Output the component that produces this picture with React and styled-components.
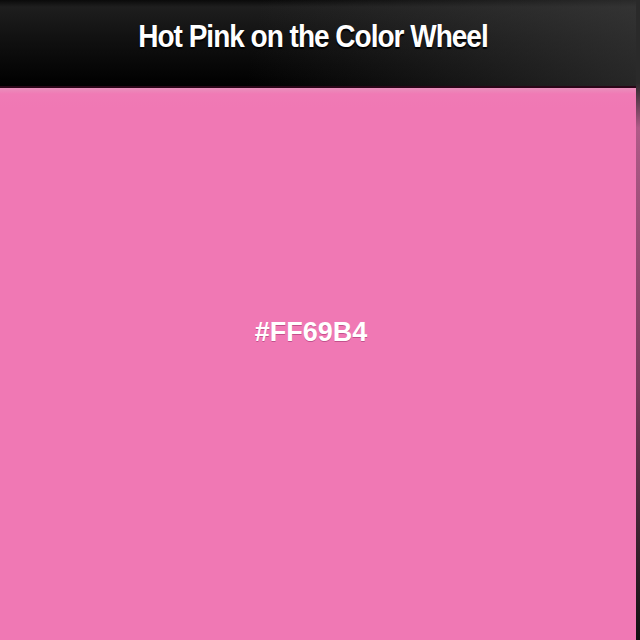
import React from 'react';
import styled, { createGlobalStyle } from 'styled-components';

const GlobalStyle = createGlobalStyle`
  html, body {
    margin: 0;
    padding: 0;
    background: #f078b4;
  }
  body {
    font-family: "Liberation Sans", Arial, sans-serif;
  }
`;

const Page = styled.div`
  display: flex;
  width: 640px;
  height: 640px;
  overflow: hidden;
`;

const Main = styled.div`
  flex: 1;
  display: flex;
  flex-direction: column;
`;

const Edge = styled.div`
  width: 4px;
  background: linear-gradient(to bottom, #2a2a2a 0%, #2a2a2a 13%, #b05a88 20%, #7a3a5c 60%, #111 100%);
`;

const Header = styled.header`
  height: 88px;
  display: flex;
  align-items: center;
  justify-content: center;
  padding: 0 10px 12px 0;
  box-sizing: border-box;
  background:
    linear-gradient(100deg, rgba(0, 0, 0, 0) 40%, rgba(70, 70, 70, 0.55) 100%),
    linear-gradient(to bottom, #0a0a0a 0%, #1e1e1e 8%, #111 45%, #000 100%);
  border-bottom: 2px solid #2a0618;
`;

const Title = styled.h1`
  margin: 0;
  color: #fff;
  font-size: 28px;
  font-weight: bold;
  letter-spacing: -1px;
  transform: scaleY(1.15);
  text-shadow: 0 1px 1px #000;
`;

const Swatch = styled.section`
  flex: 1;
  display: flex;
  align-items: center;
  justify-content: center;
  padding: 0 14px 64px 0;
  background: linear-gradient(to bottom, #e990bc 0px, #f07ab5 6px, ${({ color }) => color} 20px);
`;

const Hex = styled.div`
  color: #fff;
  font-size: 27px;
  font-weight: bold;
  text-shadow: 0 1px 0 rgba(150, 40, 100, 0.5);
`;

export default function App() {
  return (
    <>
      <GlobalStyle />
      <Page>
        <Main>
          <Header>
            <Title>Hot Pink on the Color Wheel</Title>
          </Header>
          <Swatch color="#f078b4">
            <Hex>#FF69B4</Hex>
          </Swatch>
        </Main>
        <Edge />
      </Page>
    </>
  );
}
